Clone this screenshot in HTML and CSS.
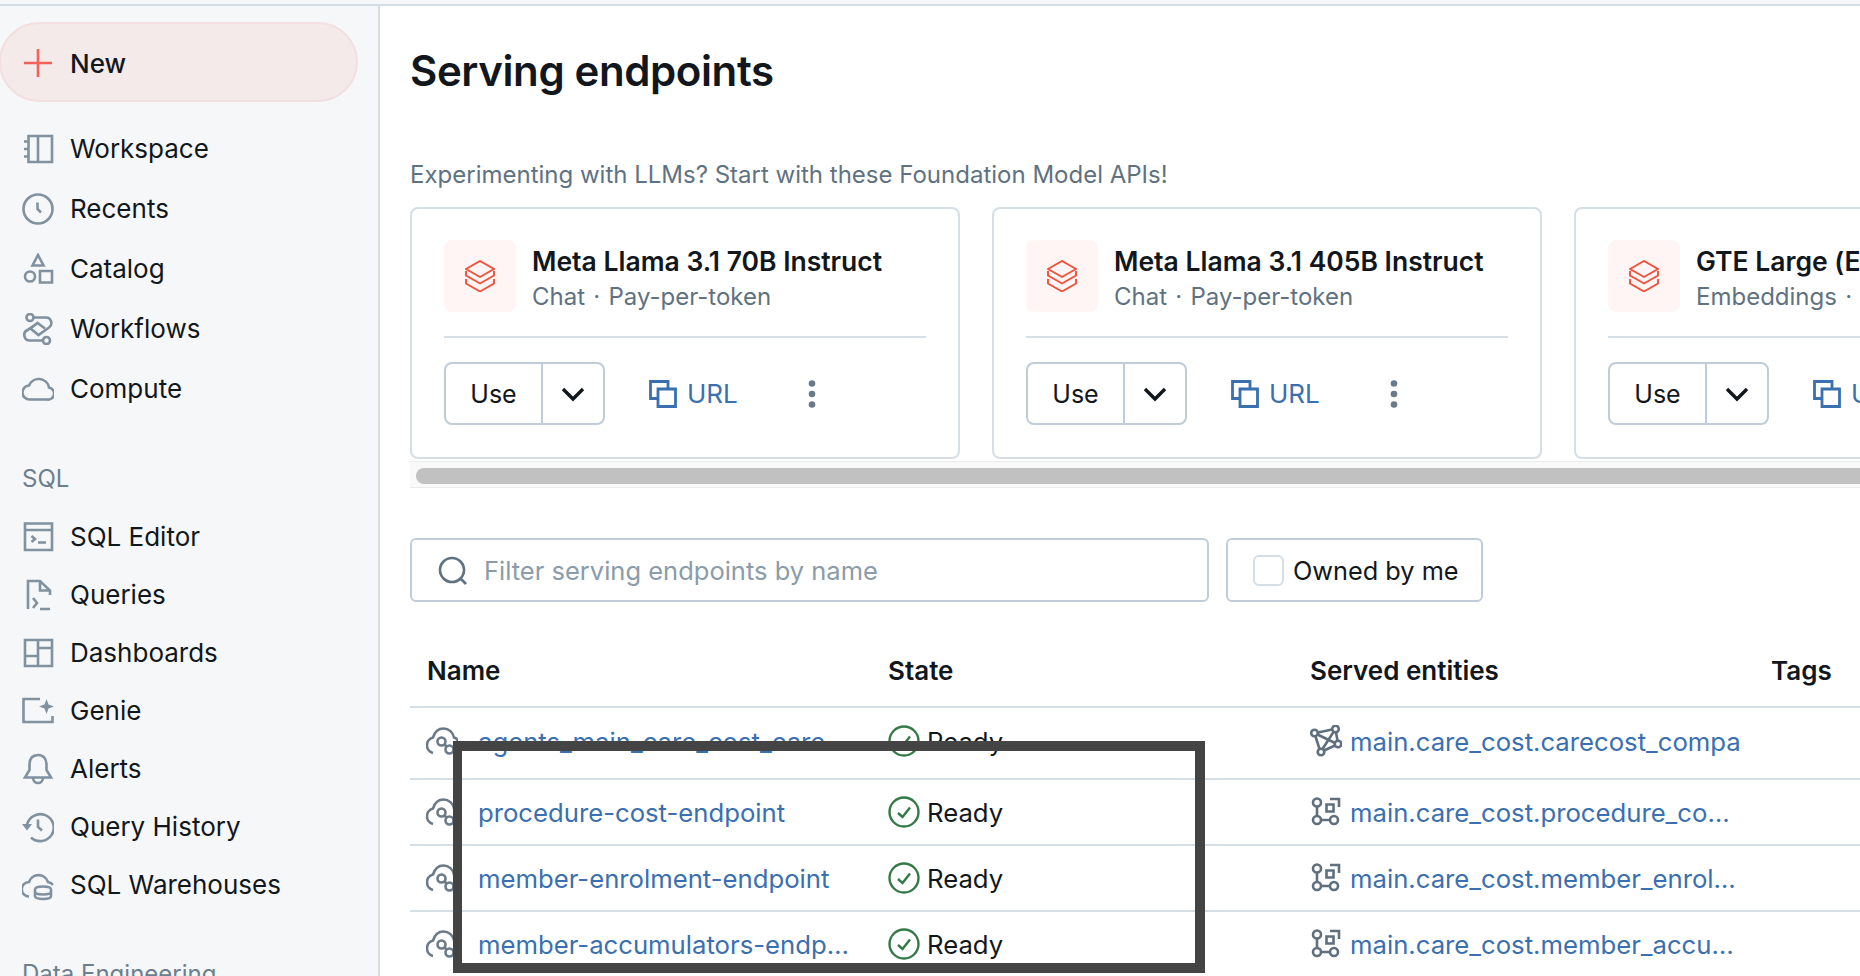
FILE: index.html
```html
<!DOCTYPE html>
<html lang="en">

<head>
    <meta charset="UTF-8">
    <title>Serving endpoints</title>
    <link rel="stylesheet" href="styles.css">
</head>

<body>
    <div class="topline"></div>
    <div class="layout">
        <!-- sidebar -->
        <nav class="sidebar">
            <button class="new-btn">
                <svg class="icon" viewBox="0 0 32 32"><path d="M16 2V30M2 16H30" stroke="#f4605a" stroke-width="2.6" fill="none"/></svg>
                New
            </button>
            <div class="nav-group nav-first">
                <a class="nav-item">
                    <svg class="icon" viewBox="0 0 32 32"><path d="M6.5 3H30V29H6.5ZM16 3V29M2 8.500H6.500M2 16H6.500M2 23.500H6.500"/></svg>
                    Workspace
                </a>
                <a class="nav-item">
                    <svg class="icon" viewBox="0 0 32 32"><circle cx="16" cy="16" r="14.500"/><path d="M15.500 9.500V16L19 19.500"/></svg>
                    Recents
                </a>
                <a class="nav-item">
                    <svg class="icon" viewBox="0 0 32 32"><path d="M16 2L21.500 12.500H10.500Z"/><circle cx="8" cy="23.500" r="5"/><path d="M18 18H30V29.500H18Z"/></svg>
                    Catalog
                </a>
                <a class="nav-item">
                    <svg class="icon" viewBox="0 0 32 32"><circle cx="8" cy="4.500" r="3.500"/><circle cx="24.500" cy="27.500" r="3.500"/><path d="M11.500 4.500H24A5.500 5.500 0 0 1 27 14.500L16.500 22L8.500 15.500L15.500 10L23 15.500M16.500 22M15.500 10L5.500 17A5.500 5.500 0 0 0 8 27.500H21"/></svg>
                    Workflows
                </a>
                <a class="nav-item">
                    <svg class="icon" viewBox="0 0 32 32"><path d="M8 26.500H25A6 6 0 0 0 27 14.500A10.500 10.500 0 0 0 7 12.500A7 7 0 0 0 8 26.500Z"/></svg>
                    Compute
                </a>
            </div>
            <div class="nav-group">
                <div class="nav-label">SQL</div>
                <a class="nav-item item-sm">
                    <svg class="icon" viewBox="0 0 32 32"><path d="M3 2.500H30V29H3ZM3 9H30"/><path d="M9.500 15L13 18L9.500 21M16 21.500H24"/></svg>
                    SQL Editor
                </a>
                <a class="nav-item item-sm">
                    <svg class="icon" viewBox="0 0 32 32"><path d="M6 30V2H18L28 11.500V16M18 2V11.500H28M11 19L15 24L11 29M18 30H28"/></svg>
                    Queries
                </a>
                <a class="nav-item item-sm">
                    <svg class="icon" viewBox="0 0 32 32"><path d="M3 3H30V29H3ZM16 3V29M3 19H16M16 11H30"/></svg>
                    Dashboards
                </a>
                <a class="nav-item item-sm">
                    <svg class="icon" viewBox="0 0 32 32"><path d="M18 4H1.500V27H30.500V21"/><path class="solid" d="M24.500 4L26.500 9.500L32 11.500L26.500 13.500L24.500 19L22.500 13.500L17 11.500L22.500 9.500Z"/></svg>
                    Genie
                </a>
                <a class="nav-item item-sm">
                    <svg class="icon" viewBox="0 0 32 32"><path d="M16 2C9.500 2 7.500 7 7.500 12V17L3 24.500H29L24.500 17V12C24.500 7 22.500 2 16 2ZM11 25A5 5 0 0 0 21 25"/></svg>
                    Alerts
                </a>
                <a class="nav-item item-sm">
                    <svg class="icon" viewBox="0 0 32 32"><path d="M5 14A13.500 13.500 0 1 1 9 26.500"/><path class="solid" d="M0 13H10L5 19.500Z"/><path d="M16 8.500V16L20 19.500"/></svg>
                    Query History
                </a>
                <a class="nav-item item-sm">
                    <svg class="icon" viewBox="0 0 32 32"><path d="M7 27.500A7 7 0 0 1 7 13A10 10 0 0 1 26 13C28 13.500 30 14.500 31 16"/><path d="M13 20.500C13 16.500 29 16.500 29 20.500V27C29 31 13 31 13 27ZM13 22.500C13 26.500 29 26.500 29 22.500"/></svg>
                    SQL Warehouses
                </a>
            </div>
            <div class="nav-group">
                <div class="nav-label">Data Engineering</div>
            </div>
        </nav>

        <!-- main -->
        <main class="main">
            <h1>Serving endpoints</h1>
            <p class="hint">Experimenting with LLMs? Start with these Foundation Model APIs!</p>

            <div class="cards">
                <div class="card">
                    <div class="card-head">
                        <div class="logo-box">
                            <svg class="logo" viewBox="0 0 30 32"><path d="M1 9L15 1L29 9L15 17ZM1 11V15.500L15 23.500L29 15.500V11M1 19V23.500L15 31.500L29 23.500V19"/></svg>
                        </div>
                        <div>
                            <div class="card-title">Meta Llama 3.1 70B Instruct</div>
                            <div class="card-sub">Chat · Pay-per-token</div>
                        </div>
                    </div>
                    <div class="card-actions">
                        <div class="use-btn">
                            <span class="use-label">Use</span>
                            <span class="use-drop"><svg class="chevron" viewBox="0 0 24 16"><path d="M2 3L12 13L22 3"/></svg></span>
                        </div>
                        <a class="url-link">
                            <svg class="copy" viewBox="0 0 28 28"><path d="M19 9V1.500H1.500V18.500H9M9 9H26.500V26.500H9Z"/></svg>
                            URL
                        </a>
                        <svg class="kebab" viewBox="0 0 8 28"><circle cx="4" cy="3.500" r="3.300"/><circle cx="4" cy="14" r="3.300"/><circle cx="4" cy="24.500" r="3.300"/></svg>
                    </div>
                </div>
                <div class="card">
                    <div class="card-head">
                        <div class="logo-box">
                            <svg class="logo" viewBox="0 0 30 32"><path d="M1 9L15 1L29 9L15 17ZM1 11V15.500L15 23.500L29 15.500V11M1 19V23.500L15 31.500L29 23.500V19"/></svg>
                        </div>
                        <div>
                            <div class="card-title">Meta Llama 3.1 405B Instruct</div>
                            <div class="card-sub">Chat · Pay-per-token</div>
                        </div>
                    </div>
                    <div class="card-actions">
                        <div class="use-btn">
                            <span class="use-label">Use</span>
                            <span class="use-drop"><svg class="chevron" viewBox="0 0 24 16"><path d="M2 3L12 13L22 3"/></svg></span>
                        </div>
                        <a class="url-link">
                            <svg class="copy" viewBox="0 0 28 28"><path d="M19 9V1.500H1.500V18.500H9M9 9H26.500V26.500H9Z"/></svg>
                            URL
                        </a>
                        <svg class="kebab" viewBox="0 0 8 28"><circle cx="4" cy="3.500" r="3.300"/><circle cx="4" cy="14" r="3.300"/><circle cx="4" cy="24.500" r="3.300"/></svg>
                    </div>
                </div>
                <div class="card">
                    <div class="card-head">
                        <div class="logo-box">
                            <svg class="logo" viewBox="0 0 30 32"><path d="M1 9L15 1L29 9L15 17ZM1 11V15.500L15 23.500L29 15.500V11M1 19V23.500L15 31.500L29 23.500V19"/></svg>
                        </div>
                        <div>
                            <div class="card-title">GTE Large (En)</div>
                            <div class="card-sub">Embeddings · Pay-per-token</div>
                        </div>
                    </div>
                    <div class="card-actions">
                        <div class="use-btn">
                            <span class="use-label">Use</span>
                            <span class="use-drop"><svg class="chevron" viewBox="0 0 24 16"><path d="M2 3L12 13L22 3"/></svg></span>
                        </div>
                        <a class="url-link">
                            <svg class="copy" viewBox="0 0 28 28"><path d="M19 9V1.500H1.500V18.500H9M9 9H26.500V26.500H9Z"/></svg>
                            URL
                        </a>
                        <svg class="kebab" viewBox="0 0 8 28"><circle cx="4" cy="3.500" r="3.300"/><circle cx="4" cy="14" r="3.300"/><circle cx="4" cy="24.500" r="3.300"/></svg>
                    </div>
                </div>
            </div>
            <div class="scroll-track"><div class="scroll-thumb"></div></div>

            <div class="filters">
                <div class="search">
                    <svg class="search-icon" viewBox="0 0 30 30"><circle cx="14" cy="14" r="12"/><path d="M23 23L28 28"/></svg>
                    <span class="placeholder">Filter serving endpoints by name</span>
                </div>
                <label class="owned"><span class="checkbox"></span>Owned by me</label>
            </div>

            <table class="endpoints">
                <thead>
                    <tr>
                        <th class="col-name">Name</th>
                        <th class="col-state">State</th>
                        <th class="col-entity">Served entities</th>
                        <th>Tags</th>
                    </tr>
                </thead>
                <tbody>
                    <tr class="row-first">
                        <td><div class="cell"><svg class="cloud" viewBox="0 0 32 32"><path d="M7 28A8 8 0 0 1 7 12.500C9 6 13.500 3.500 17.500 3.500C23 3.500 27 7.500 28 12.500C30 13 31.500 14.500 32 16"/><circle cx="15.500" cy="16.500" r="4"/><circle cx="23.500" cy="24.500" r="4"/><path d="M18.500 19.500L20.500 21.500"/></svg><a class="name-link">agents_main_care_cost_care</a></div></td>
                        <td><div class="cell"><svg class="ok" viewBox="0 0 32 32"><circle cx="16" cy="16" r="14.500"/><path d="M10 17L14.500 21L22 11.500"/></svg>Ready</div></td>
                        <td><div class="cell"><svg class="entity" viewBox="0 0 32 32"><circle cx="4.500" cy="8" r="3.300"/><circle cx="25.500" cy="4" r="3.300"/><circle cx="28" cy="19" r="3.300"/><circle cx="11" cy="27" r="3.300"/><path d="M8 7.500L22 4.500M26 7.500L27.500 15.500M25 20.500L14 25.500M9.500 24L5.500 11.500M7.500 9.500L25 18M12.500 24L23.500 7"/></svg><a class="entity-link entity-full">main.care_cost.carecost_compa</a></div></td>
                        <td></td>
                    </tr>
                    <tr>
                        <td><div class="cell"><svg class="cloud" viewBox="0 0 32 32"><path d="M7 28A8 8 0 0 1 7 12.500C9 6 13.500 3.500 17.500 3.500C23 3.500 27 7.500 28 12.500C30 13 31.500 14.500 32 16"/><circle cx="15.500" cy="16.500" r="4"/><circle cx="23.500" cy="24.500" r="4"/><path d="M18.500 19.500L20.500 21.500"/></svg><a class="name-link">procedure-cost-endpoint</a></div></td>
                        <td><div class="cell"><svg class="ok" viewBox="0 0 32 32"><circle cx="16" cy="16" r="14.500"/><path d="M10 17L14.500 21L22 11.500"/></svg>Ready</div></td>
                        <td><div class="cell"><svg class="entity" viewBox="0 0 32 32"><circle cx="7" cy="6.500" r="4"/><circle cx="7" cy="24" r="4"/><circle cx="24" cy="24" r="4"/><path d="M7 10.500V20M11 24H20M16.500 8.500H23.500V15.500H16.500ZM20 3H29V11"/></svg><a class="entity-link">main.care_cost.procedure_cost_model</a></div></td>
                        <td></td>
                    </tr>
                    <tr>
                        <td><div class="cell"><svg class="cloud" viewBox="0 0 32 32"><path d="M7 28A8 8 0 0 1 7 12.500C9 6 13.500 3.500 17.500 3.500C23 3.500 27 7.500 28 12.500C30 13 31.500 14.500 32 16"/><circle cx="15.500" cy="16.500" r="4"/><circle cx="23.500" cy="24.500" r="4"/><path d="M18.500 19.500L20.500 21.500"/></svg><a class="name-link">member-enrolment-endpoint</a></div></td>
                        <td><div class="cell"><svg class="ok" viewBox="0 0 32 32"><circle cx="16" cy="16" r="14.500"/><path d="M10 17L14.500 21L22 11.500"/></svg>Ready</div></td>
                        <td><div class="cell"><svg class="entity" viewBox="0 0 32 32"><circle cx="7" cy="6.500" r="4"/><circle cx="7" cy="24" r="4"/><circle cx="24" cy="24" r="4"/><path d="M7 10.500V20M11 24H20M16.500 8.500H23.500V15.500H16.500ZM20 3H29V11"/></svg><a class="entity-link">main.care_cost.member_enrolment_model</a></div></td>
                        <td></td>
                    </tr>
                    <tr>
                        <td><div class="cell"><svg class="cloud" viewBox="0 0 32 32"><path d="M7 28A8 8 0 0 1 7 12.500C9 6 13.500 3.500 17.500 3.500C23 3.500 27 7.500 28 12.500C30 13 31.500 14.500 32 16"/><circle cx="15.500" cy="16.500" r="4"/><circle cx="23.500" cy="24.500" r="4"/><path d="M18.500 19.500L20.500 21.500"/></svg><a class="name-link">member-accumulators-endpoint</a></div></td>
                        <td><div class="cell"><svg class="ok" viewBox="0 0 32 32"><circle cx="16" cy="16" r="14.500"/><path d="M10 17L14.500 21L22 11.500"/></svg>Ready</div></td>
                        <td><div class="cell"><svg class="entity" viewBox="0 0 32 32"><circle cx="7" cy="6.500" r="4"/><circle cx="7" cy="24" r="4"/><circle cx="24" cy="24" r="4"/><path d="M7 10.500V20M11 24H20M16.500 8.500H23.500V15.500H16.500ZM20 3H29V11"/></svg><a class="entity-link">main.care_cost.member_accumulators_model</a></div></td>
                        <td></td>
                    </tr>
                </tbody>
            </table>
        </main>
    </div>

    <!-- highlight drawn on top of the screenshot -->
    <div class="highlight"></div>
</body>

</html>
```

FILE: styles.css
```css
/* page */
html,
body {
    margin: 0;
    height: 100%;
    overflow: hidden;
}

body {
    position: relative;
    font-family: Inter, "Noto Sans", sans-serif;
    font-size: 25.6px;
    color: #11171c;
    background-color: white;
}

.topline {
    height: 4px;
    background-color: #f6f7f9;
    border-bottom: 2px solid #d5dde5;
}

.layout {
    display: flex;
    height: 970px;
}

/* sidebar */
.sidebar {
    flex: 0 0 380px;
    box-sizing: border-box;
    height: 970px;
    padding-top: 16px;
    overflow: hidden;
    font-size: 26px;
    background-color: #f6f7f9;
    border-right: 2px solid #d5dde5;
}

.icon {
    flex: none;
    width: 32px;
    height: 32px;
    fill: none;
    stroke: #8091a0;
    stroke-width: 2.6;
}

.icon .solid {
    fill: #8091a0;
    stroke: none;
}

.new-btn {
    display: flex;
    align-items: center;
    gap: 16px;
    box-sizing: border-box;
    width: 359px;
    height: 80px;
    margin-left: -1px;
    padding: 2px 0 0 21px;
    font: 500 26px Inter, sans-serif;
    color: #11171c;
    background-color: #f5eaea;
    border: 2px solid #f3dfdf;
    border-radius: 40px;
}

.nav-first {
    margin-top: 17px;
}

.nav-group + .nav-group {
    margin-top: 31px;
}

.nav-item {
    display: flex;
    align-items: center;
    gap: 16px;
    box-sizing: border-box;
    height: 60px;
    padding: 0 0 2px 22px;
}

.nav-item .icon {
    margin-top: 2px;
}

.item-sm {
    height: 58px;
}

.nav-label {
    height: 58px;
    line-height: 58px;
    padding-left: 22px;
    font-size: 24px;
    color: #6b7f8f;
}

/* main */
.main {
    flex: 1;
    min-width: 0;
    padding-left: 30px;
    overflow: hidden;
}

h1 {
    margin: 37px 0 0;
    font-size: 42px;
    line-height: 56px;
    font-weight: 600;
    letter-spacing: -0.4px;
}

.hint {
    margin: 61px 0 0;
    height: 30px;
    line-height: 30px;
    font-size: 24px;
    color: #5f7281;
}

/* cards */
.cards {
    display: flex;
    gap: 32px;
    margin-top: 17px;
}

.card {
    flex: 0 0 550px;
    box-sizing: border-box;
    height: 252px;
    padding: 31px 32px 0;
    background-color: white;
    border: 2px solid #d5dde5;
    border-radius: 8px;
}

.card-head {
    display: flex;
    gap: 16px;
    width: 482px;
    height: 96px;
    border-bottom: 2px solid #d5dde5;
}

.logo-box {
    display: flex;
    align-items: center;
    justify-content: center;
    flex: none;
    width: 72px;
    height: 72px;
    background-color: #fff5f5;
    border-radius: 8px;
}

.logo {
    width: 30px;
    height: 32px;
    fill: none;
    stroke: #f0513c;
    stroke-width: 1.9;
}

.card-title {
    margin-top: 3px;
    line-height: 36px;
    font-size: 26.5px;
    font-weight: 600;
    white-space: nowrap;
}

.card-sub {
    line-height: 36px;
    font-size: 24px;
    word-spacing: 1.5px;
    color: #5f7281;
    white-space: nowrap;
}

.card-actions {
    display: flex;
    align-items: center;
    margin-top: 24px;
    height: 63px;
}

.use-btn {
    display: flex;
    box-sizing: border-box;
    width: 161px;
    height: 63px;
    border: 2px solid #c0ccd8;
    border-radius: 8px;
}

.use-label {
    display: flex;
    align-items: center;
    justify-content: center;
    width: 95px;
    font-size: 25px;
    border-right: 2px solid #c0ccd8;
}

.use-drop {
    display: flex;
    align-items: center;
    justify-content: center;
    flex: 1;
}

.chevron {
    width: 24px;
    height: 16px;
    fill: none;
    stroke: #11171c;
    stroke-width: 3.400;
}

.url-link {
    display: flex;
    align-items: center;
    gap: 10px;
    margin-left: 44px;
    font-size: 26px;
    color: #3a6fb0;
}

.copy {
    width: 28px;
    height: 28px;
    fill: none;
    stroke: #3a6fb0;
    stroke-width: 2.800;
}

.kebab {
    width: 8px;
    height: 28px;
    margin-left: 70px;
    fill: #6b7a88;
}

/* horizontal scrollbar */
.scroll-track {
    box-sizing: border-box;
    height: 27px;
    margin-top: 2px;
    padding: 6px 0 0 6px;
    background-color: #f9f9f9;
    border-top: 1px solid #ebebeb;
    border-bottom: 1px solid #ebebeb;
}

.scroll-thumb {
    height: 16px;
    background-color: #c1c1c1;
    border-radius: 8px 0 0 8px;
}

/* filters */
.filters {
    display: flex;
    gap: 17px;
    margin-top: 50px;
}

.search,
.owned {
    display: flex;
    align-items: center;
    box-sizing: border-box;
    height: 64px;
    padding-top: 1px;
    border: 2px solid #c0ccd8;
    border-radius: 6px;
}

.search {
    width: 799px;
    padding-left: 26px;
}

.search-icon {
    flex: none;
    width: 30px;
    height: 30px;
    fill: none;
    stroke: #5f7281;
    stroke-width: 2.600;
}

.placeholder {
    margin-left: 16px;
    font-size: 25.5px;
    color: #8a9caa;
}

.owned {
    width: 257px;
    padding-left: 25px;
    font-size: 25.3px;
}

.checkbox {
    flex: none;
    box-sizing: border-box;
    width: 31px;
    height: 31px;
    margin-right: 9px;
    border: 2px solid #d5dde5;
    border-radius: 6px;
}

/* table */
.endpoints {
    table-layout: fixed;
    width: 1450px;
    margin-top: 33px;
    border-collapse: collapse;
}

.col-name {
    width: 461px;
}

.col-state {
    width: 422px;
}

.col-entity {
    width: 461px;
}

th,
td {
    box-sizing: border-box;
    padding: 0 0 0 17px;
    border-bottom: 2px solid #d5dde5;
}

th {
    height: 72px;
    text-align: left;
    font-size: 26px;
    font-weight: 600;
}

td {
    height: 66px;
}

.row-first td {
    height: 72px;
    padding-bottom: 4px;
}

.cell {
    display: flex;
    align-items: center;
    font-size: 25.7px;
}

.cloud,
.entity,
.ok {
    flex: none;
    width: 32px;
    height: 32px;
    fill: none;
}

.cloud {
    margin-left: -1px;
    margin-right: 20px;
    stroke: #6b7a88;
    stroke-width: 2.600;
}

.ok {
    margin-right: 7px;
    stroke: #347a47;
    stroke-width: 2.400;
}

.entity {
    margin-right: 8px;
    stroke: #5f6f7d;
    stroke-width: 2.600;
}

.name-link,
.entity-link {
    overflow: hidden;
    white-space: nowrap;
    text-overflow: ellipsis;
    color: #3a6fb0;
}

.name-link {
    max-width: 374px;
}

.entity-link {
    max-width: 388px;
}

.entity-full {
    max-width: none;
}

/* highlight frame */
.highlight {
    position: absolute;
    left: 453px;
    top: 741px;
    width: 752px;
    height: 232px;
    box-sizing: border-box;
    border: 10px solid #444444;
    border-left-width: 9px;
}
```
